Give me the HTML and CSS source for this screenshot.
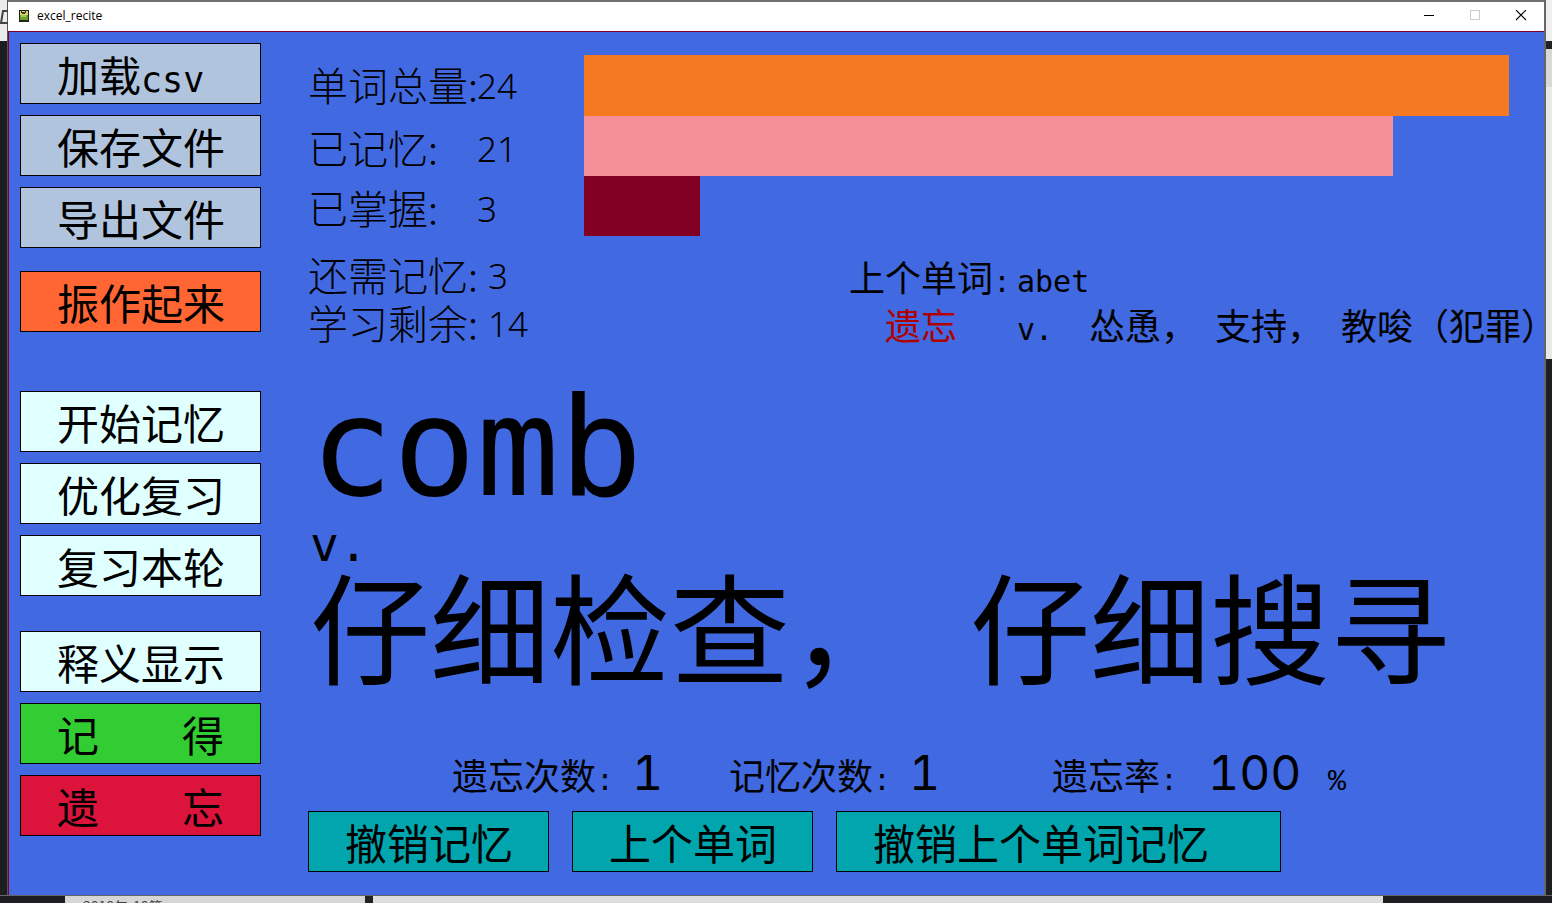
FILE: index.html
```html
<!DOCTYPE html>
<html lang="zh-CN">
<head>
<meta charset="utf-8">
<meta name="viewport" content="width=device-width, initial-scale=1">
<title>excel_recite</title>
<link rel="stylesheet" href="styles.css">
</head>
<body>
<div class="desktop">
  <div class="rail rail-left" aria-hidden="true">
    <svg width="8" height="41" viewBox="0 0 8 41"><path d="M8 11H3L1 23H8" fill="none" stroke="#444" stroke-width="2"/></svg>
  </div>
  <div class="window">
    <header class="titlebar">
      <svg class="app-icon" width="10" height="12" viewBox="0 0 10 12"><rect width="10" height="12" fill="#1c2614"/><rect x="1" y="1" width="8" height="4" fill="#d9cf7a"/><path d="M2 1h1v1h3v-1h1v2h-1v1h-3v-1h-1z" fill="#3c3a20"/><rect x="1" y="5" width="8" height="5" fill="#6aa22c"/><rect x="2" y="5" width="5" height="2" fill="#a6cf54"/></svg>
      <h1 class="title">excel_recite</h1>
      <div class="controls">
        <button class="control" type="button" aria-label="最小化"><svg width="12" height="12" viewBox="0 0 12 12"><path d="M1 5.500H11" stroke="#000"/></svg></button>
        <button class="control" type="button" aria-label="最大化" disabled><svg width="12" height="12" viewBox="0 0 12 12"><rect x="1.500" y="0.500" width="9" height="9" fill="none" stroke="#ccc"/></svg></button>
        <button class="control" type="button" aria-label="关闭"><svg width="12" height="12" viewBox="0 0 12 12"><path d="M1 0L11 10M11 0L1 10" stroke="#000" stroke-width="1.100"/></svg></button>
      </div>
    </header>
    <div class="app">
      <nav class="sidebar">
        <div class="group group-file">
          <button class="btn btn-file" type="button">加载<span class="mono">csv</span></button>
          <button class="btn btn-file" type="button">保存文件</button>
          <button class="btn btn-file" type="button">导出文件</button>
        </div>
        <div class="group group-cheer">
          <button class="btn btn-cheer" type="button">振作起来</button>
        </div>
        <div class="group group-study">
          <button class="btn btn-study" type="button">开始记忆</button>
          <button class="btn btn-study" type="button">优化复习</button>
          <button class="btn btn-study" type="button">复习本轮</button>
        </div>
        <div class="group">
          <button class="btn btn-study" type="button">释义显示</button>
          <button class="btn btn-known split" type="button"><span>记</span><span>得</span></button>
          <button class="btn btn-forgot split" type="button"><span>遗</span><span>忘</span></button>
        </div>
      </nav>
      <main class="content">
        <section class="progress">
          <div class="stat"><span class="label">单词总量:</span><span class="num">24</span></div>
          <div class="track"><div class="bar bar-total" style="width:100%"></div></div>
          <div class="stat low"><span class="label">已记忆:</span><span class="num">21</span></div>
          <div class="track"><div class="bar bar-learned" style="width:87.5%"></div></div>
          <div class="stat low"><span class="label">已掌握:</span><span class="num">3</span></div>
          <div class="track"><div class="bar bar-mastered" style="width:12.5%"></div></div>
        </section>
        <section class="details">
          <div class="remaining">
            <div class="stat"><span class="label wide">还需记忆:</span><span class="num">3</span></div>
            <div class="stat"><span class="label wide">学习剩余:</span><span class="num">14</span></div>
          </div>
          <div class="previous">
            <div class="prev-label">上个单词<span class="thin">:</span></div>
            <div class="prev-word">abet</div>
            <div class="prev-state">遗忘</div>
            <div class="prev-meaning"><span class="prev-pos">v.</span><span>怂恿，</span><span>支持，</span><span>教唆（犯罪）</span></div>
          </div>
        </section>
        <section class="card">
          <h2 class="word">comb</h2>
          <p class="pos">v.</p>
          <p class="meaning"><span>仔细检查，</span><span>仔细搜寻</span></p>
        </section>
        <section class="counts">
          <div class="count"><span class="count-label">遗忘次数<span class="thin">:</span></span><span class="count-num">1</span></div>
          <div class="count"><span class="count-label">记忆次数<span class="thin">:</span></span><span class="count-num">1</span></div>
          <div class="count rate"><span class="count-label">遗忘率<span class="thin">:</span></span><span class="count-num">100</span><span class="thin">%</span></div>
        </section>
        <div class="actions">
          <button class="btn btn-action" type="button">撤销记忆</button>
          <button class="btn btn-action" type="button">上个单词</button>
          <button class="btn btn-action btn-long" type="button">撤销上个单词记忆</button>
        </div>
      </main>
    </div>
  </div>
  <div class="rail rail-right" aria-hidden="true"></div>
  <div class="shelf" aria-hidden="true"><span class="shelf-text">2018年-10第</span></div>
</div>
</body>
</html>
```
FILE: styles.css
```css
* { box-sizing: border-box; }

body {
  margin: 0;
  background: #1e1e20;
  color: #000;
  font-family: "Noto Sans CJK SC", "Noto Sans", sans-serif;
}

h1, h2, p { margin: 0; font-weight: 400; }

.desktop {
  display: grid;
  grid-template-columns: 8px minmax(0, 1fr) 8px;
  grid-template-rows: 1fr 8px;
  min-height: 100vh;
}

.rail-left {
  background: linear-gradient(#ececec 41px, #1e1e20 41px);
  border-right: 1px solid #555;
}
.rail-left svg { display: block; }

.rail-right {
  background: linear-gradient(#eee 41px, #222226 41px 49px, #d8d8d8 49px 87px, #e8e8e8 87px 359px, #1e1e20 359px);
  border-left: 2px solid #666;
}

.shelf {
  grid-column: 1 / -1;
  height: 8px;
  overflow: hidden;
  padding-left: 83px;
  border-top: 1px solid #666;
  background: linear-gradient(90deg, #1e1e20 65px, #d6d6d6 65px 365px, #222 365px 373px, #dedede 373px 1383px, #1e1e20 1383px);
}
.shelf-text { display: block; font-size: 14px; line-height: 20px; color: #444; }

.window {
  display: flex;
  flex-direction: column;
  border-top: 2px solid #707070;
  background: #4169e1;
}

.titlebar {
  display: flex;
  align-items: center;
  height: 29px;
  padding: 0 0 2px 11px;
  background: #fff;
}
.title { margin-left: 8px; font: 12px/16px "Open Sans", "Noto Sans", sans-serif; }
.controls { display: flex; margin-left: auto; }
.control {
  display: grid;
  place-items: center;
  width: 46px;
  height: 26px;
  padding: 0;
  border: 0;
  background: none;
}

.app {
  display: flex;
  flex: 1;
  border-top: 1px solid #820024;
  border-left: 1px solid #820024;
}

.sidebar { flex: none; width: 252px; padding: 11px 0 0 11px; }
.group { display: flex; flex-direction: column; gap: 11px; }
.group-file { margin-bottom: 23px; }
.group-cheer { margin-bottom: 59px; }
.group-study { margin-bottom: 35px; }

.btn {
  display: block;
  width: 241px;
  height: 61px;
  padding: 0 36px;
  border: 1px solid #000;
  color: #000;
  font-family: inherit;
  font-size: 42px;
  line-height: 56px;
  text-align: left;
  white-space: nowrap;
}
.btn-file { background: #b0c4de; }
.btn-cheer { background: #ff6633; }
.btn-study { background: #e0ffff; }
.btn-known { background: #32cd32; }
.btn-forgot { background: #dc143c; }
.btn-action { background: #00a5ad; }
.btn-long { width: 445px; }
.split { display: flex; align-items: center; justify-content: space-between; }
.mono { font-family: "DejaVu Sans Mono", monospace; font-size: 35px; line-height: 36px; }

.content { flex: 1; min-width: 0; padding: 23px 0 0 47px; }

.progress {
  display: grid;
  grid-template-columns: 276px minmax(0, 1fr);
  grid-template-rows: 61px 60px 60px;
  padding-right: 35px;
}
.stat {
  display: flex;
  align-items: center;
  font-size: 40px;
  line-height: 44px;
  font-weight: 300;
  white-space: nowrap;
}
.low { padding-top: 6px; }
.label { width: 169px; margin-bottom: 4px; }
.label.wide { width: 180px; }
.num { font: 300 35px/48px "Noto Sans", sans-serif; }
.bar { height: 100%; }
.bar-total { background: #f57920; }
.bar-learned { background: #f58f98; }
.bar-mastered { background: #820024; }

.details { display: flex; padding-top: 16px; overflow-x: clip; }
.remaining { flex: none; width: 541px; }
.previous {
  display: grid;
  grid-template-columns: 168px max-content;
  grid-template-rows: 48px 48px;
  align-items: baseline;
  font-size: 36px;
  line-height: 48px;
  white-space: nowrap;
}
.prev-word, .prev-pos { font-family: "DejaVu Sans Mono", monospace; font-size: 30px; line-height: 36px; }
.prev-state { padding-left: 36px; color: #b00000; }
.prev-meaning { display: flex; align-items: baseline; gap: 18px; }
.prev-pos { width: 54px; }

.card { padding: 28px 0 0 2px; }
.word { font: 138px/144px "DejaVu Sans Mono", monospace; }
.pos { font: 48px/48px "DejaVu Sans Mono", monospace; }
.meaning { display: flex; gap: 60px; font-size: 120px; line-height: 112px; white-space: nowrap; }

.counts { display: flex; margin-top: 69px; padding-left: 144px; font-size: 36px; line-height: 48px; }
.count { display: flex; align-items: baseline; width: 277px; }
.count-label { width: 180px; }
.thin { font-family: "Liberation Mono", monospace; font-size: 30px; line-height: 30px; }
.count-num { font: 48px/48px Inter, sans-serif; font-variant-numeric: tabular-nums; }
.rate { width: auto; gap: 12px; margin-left: 46px; }
.rate .count-label { width: 144px; }
.rate .count-num { min-width: 108px; }

.actions { display: flex; gap: 23px; padding: 13px 0 23px; }
```
